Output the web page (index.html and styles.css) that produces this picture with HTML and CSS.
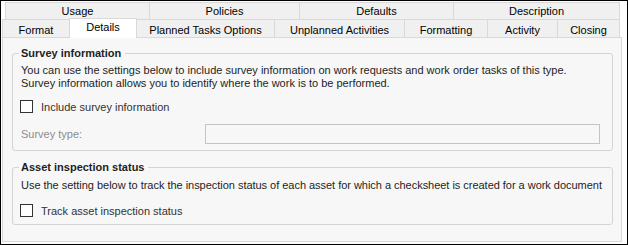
FILE: index.html
```html
<!DOCTYPE html>
<html>
<head>
    <title>Work Type - Details</title>
    <link rel="stylesheet" href="styles.css">
</head>
<body>
    <div class="window">
        <div class="tab-row back">
            <div class="tab w-usage">Usage</div>
            <div class="tab w-policies">Policies</div>
            <div class="tab w-defaults">Defaults</div>
            <div class="tab w-description">Description</div>
        </div>
        <div class="tab-row front">
            <div class="tab w-format">Format</div>
            <div class="tab w-details selected">Details</div>
            <div class="tab w-planned">Planned Tasks Options</div>
            <div class="tab w-unplanned">Unplanned Activities</div>
            <div class="tab w-formatting">Formatting</div>
            <div class="tab w-activity">Activity</div>
            <div class="tab w-closing">Closing</div>
        </div>
        <div class="panel">
            <fieldset class="group survey">
                <legend>Survey information</legend>
                <p class="desc">You can use the settings below to include survey information on work requests and work order tasks of this type.<br>Survey information allows you to identify where the work is to be performed.</p>
                <label class="check-row">
                    <span class="checkbox"></span>
                    <span>Include survey information</span>
                </label>
                <div class="field-row">
                    <span class="field-label">Survey type:</span>
                    <span class="field-input"></span>
                </div>
            </fieldset>
            <fieldset class="group asset">
                <legend>Asset inspection status</legend>
                <p class="desc">Use the setting below to track the inspection status of each asset for which a checksheet is created for a work document</p>
                <label class="check-row">
                    <span class="checkbox"></span>
                    <span>Track asset inspection status</span>
                </label>
            </fieldset>
        </div>
    </div>
</body>
</html>
```

FILE: styles.css
```css
body {
    margin: 0;
    font-family: "Liberation Sans", Arial, sans-serif;
    font-size: 11px;
    color: #1e1e1e;
}
.window {
    width: 628px;
    height: 245px;
    box-sizing: border-box;
    border: 1px solid #000;
    background-color: #fff;
    overflow: hidden;
}
.tab-row {
    display: flex;
    align-items: flex-end;
}
.tab-row.back {
    margin: 1px 0 0 4px;
    height: 17px;
}
.tab-row.front {
    margin-left: 1px;
    height: 18px;
}
.tab {
    box-sizing: border-box;
    height: 100%;
    background-color: #f0f0f0;
    border: 1px solid #d9d9d9;
    border-bottom: none;
    margin-right: -1px;
    text-align: center;
    color: #000;
}
.back .tab {
    line-height: 16px;
}
.front .tab {
    line-height: 20px;
}
.front .tab.selected {
    position: relative;
    z-index: 1;
    height: 20px;
    margin-bottom: -1px;
    background-color: #fff;
    line-height: 17px;
}
.w-usage { width: 145px; }
.w-policies { width: 151px; }
.w-defaults { width: 155px; }
.w-description { width: 167px; }
.w-format { width: 68px; }
.w-details { width: 68px; }
.w-planned { width: 139px; }
.w-unplanned { width: 131px; }
.w-formatting { width: 84px; }
.w-activity { width: 71px; }
.w-closing { width: 63px; }

.panel {
    margin-left: 1px;
    width: 620px;
    height: 205px;
    box-sizing: border-box;
    border: 1px solid #d9d9d9;
    background-color: #f7f7f7;
    padding: 8px 8px 0 9px;
}
.group {
    margin: 0;
    padding: 0 8px 6px 6px;
    border: 1px solid #d4d4d4;
    border-radius: 3px;
    display: flex;
    flex-direction: column;
}
.group legend {
    padding: 0 4px 0 2px;
    line-height: 14px;
    font-weight: bold;
    color: #1e1e1e;
}
.desc {
    margin: 4px 0 0 2px;
    line-height: 13px;
    white-space: nowrap;
}
.asset .desc {
    margin-top: 5px;
    letter-spacing: -0.03px;
}
.check-row {
    display: flex;
    align-items: center;
    height: 15px;
    margin: 9px 0 0 1px;
    color: #333;
}
.asset .check-row {
    margin-top: 11px;
}
.checkbox {
    width: 13px;
    height: 13px;
    box-sizing: border-box;
    border: 1px solid #333;
    background-color: #fff;
    margin-right: 8px;
}
.field-row {
    display: flex;
    align-items: center;
    height: 20px;
    margin: 10px 0 0 2px;
}
.field-label {
    width: 184px;
    color: #8d8d8d;
}
.field-input {
    width: 395px;
    height: 20px;
    box-sizing: border-box;
    border: 1px solid #c4c4c4;
    background-color: #f7f7f7;
}
.asset {
    margin-top: 9px;
}
```
